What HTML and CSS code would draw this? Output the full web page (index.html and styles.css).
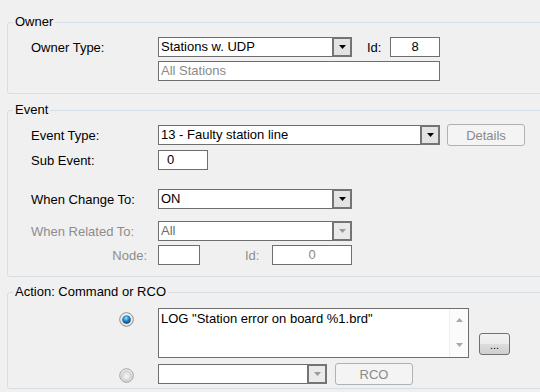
FILE: index.html
```html
<!DOCTYPE html>
<html>
<head>
<meta charset="utf-8">
<link rel="stylesheet" href="styles.css">
</head>
<body>
<fieldset class="group g-owner">
  <legend>Owner</legend>
  <div class="row r-o1">
    <span class="lbl">Owner Type:</span>
    <div class="combo w194">
      <span class="val">Stations w. UDP</span>
      <span class="drop"><svg width="7" height="4" viewBox="0 0 7 4"><polygon points="0,0 7,0 3.5,4" fill="#000"/></svg></span>
    </div>
    <span class="id-lbl">Id:</span>
    <div class="field w50 center">8</div>
  </div>
  <div class="row r-o2">
    <span class="lbl"></span>
    <div class="field w282 dis">All Stations</div>
  </div>
</fieldset>

<fieldset class="group g-event">
  <legend>Event</legend>
  <div class="row r-e1">
    <span class="lbl">Event Type:</span>
    <div class="combo w282">
      <span class="val">13 - Faulty station line</span>
      <span class="drop"><svg width="7" height="4" viewBox="0 0 7 4"><polygon points="0,0 7,0 3.5,4" fill="#000"/></svg></span>
    </div>
    <div class="btn dis-btn w78 ml7">Details</div>
  </div>
  <div class="row r-e2">
    <span class="lbl">Sub Event:</span>
    <div class="field w50 pad9">0</div>
  </div>
  <div class="row r-e3">
    <span class="lbl">When Change To:</span>
    <div class="combo w194">
      <span class="val">ON</span>
      <span class="drop"><svg width="7" height="4" viewBox="0 0 7 4"><polygon points="0,0 7,0 3.5,4" fill="#000"/></svg></span>
    </div>
  </div>
  <div class="row r-e4">
    <span class="lbl dis-txt">When Related To:</span>
    <div class="combo w194 combo-dis">
      <span class="val">All</span>
      <span class="drop"><svg width="7" height="4" viewBox="0 0 7 4"><polygon points="0,0 7,0 3.5,4" fill="#9a9a9a"/></svg></span>
    </div>
  </div>
  <div class="row r-e5">
    <span class="lbl right dis-txt">Node:</span>
    <div class="field w42"></div>
    <span class="id2 dis-txt">Id:</span>
    <div class="field w80 center dis">0</div>
  </div>
</fieldset>

<fieldset class="group g-action">
  <legend>Action: Command or RCO</legend>
  <div class="row r-a1">
    <span class="radio-cell">
      <svg class="radio" width="15" height="15" viewBox="0 0 15 15">
        <defs>
          <radialGradient id="ring1" cx="50%" cy="35%" r="65%">
            <stop offset="0" stop-color="#ffffff"/>
            <stop offset="1" stop-color="#d2d2d2"/>
          </radialGradient>
          <radialGradient id="dot" cx="45%" cy="35%" r="65%">
            <stop offset="0" stop-color="#9be4ff"/>
            <stop offset="0.45" stop-color="#2a8fd4"/>
            <stop offset="1" stop-color="#0b3a66"/>
          </radialGradient>
        </defs>
        <circle cx="7.5" cy="7.5" r="6.8" fill="url(#ring1)" stroke="#8c8e90" stroke-width="1"/>
        <circle cx="7.5" cy="7.5" r="5.4" fill="none" stroke="#f6f6f6" stroke-width="0.8"/>
        <circle cx="7.5" cy="7.5" r="4.3" fill="url(#dot)"/>
      </svg>
    </span>
    <div class="memo">
      <span class="memo-txt">LOG "Station error on board %1.brd"</span>
      <span class="sb">
        <svg width="7" height="4" viewBox="0 0 7 4"><polygon points="0,4 7,4 3.5,0" fill="#a8a8a8"/></svg>
        <svg width="7" height="4" viewBox="0 0 7 4"><polygon points="0,0 7,0 3.5,4" fill="#a8a8a8"/></svg>
      </span>
    </div>
    <div class="btn more">...</div>
  </div>
  <div class="row r-a2">
    <span class="radio-cell">
      <svg class="radio" width="15" height="15" viewBox="0 0 15 15">
        <defs>
          <radialGradient id="ring2" cx="50%" cy="35%" r="65%">
            <stop offset="0" stop-color="#ffffff"/>
            <stop offset="1" stop-color="#d6d6d6"/>
          </radialGradient>
          <radialGradient id="ring2in" cx="50%" cy="60%" r="60%">
            <stop offset="0" stop-color="#f4f4f4"/>
            <stop offset="1" stop-color="#d8d8d8"/>
          </radialGradient>
        </defs>
        <circle cx="7.5" cy="7.5" r="6.8" fill="url(#ring2)" stroke="#a3a5a7" stroke-width="1"/>
        <circle cx="7.5" cy="7.5" r="4.6" fill="url(#ring2in)" stroke="#c4c4c4" stroke-width="0.8"/>
      </svg>
    </span>
    <div class="combo w169 combo-dis">
      <span class="val"></span>
      <span class="drop"><svg width="7" height="4" viewBox="0 0 7 4"><polygon points="0,0 7,0 3.5,4" fill="#9a9a9a"/></svg></span>
    </div>
    <div class="btn dis-btn w78 ml8">RCO</div>
  </div>
</fieldset>
</body>
</html>
```

FILE: styles.css
```css
* { box-sizing: border-box; }
html, body { margin: 0; padding: 0; overflow: hidden; }
body {
  width: 540px;
  height: 392px;
  background: #f0f0f0;
  font-family: "Liberation Sans", Arial, sans-serif;
  font-size: 13px;
  line-height: 15px;
  color: #000;
}

.group {
  border: 1px solid #d5dfe5;
  border-radius: 3px;
  margin: 0 -20px 0 7px;
  padding: 0;
  min-width: 0;
}
.group legend {
  padding: 0 2px;
  margin-left: 5px;
  line-height: 14px;
}
.g-owner { margin-top: 15px; padding-bottom: 12px; }
.g-event { margin-top: 9px; padding-bottom: 11px; }
.g-action { margin-top: 8px; padding-bottom: 3px; }

.row {
  display: flex;
  align-items: center;
  padding-left: 23px;
}
.lbl { width: 127px; flex: none; white-space: nowrap; }
.lbl.right { text-align: right; padding-right: 11px; }
.dis-txt { color: #8d8d8d; }

.r-o1 { margin-top: 8px; height: 20px; }
.r-o2 { margin-top: 4px; height: 20px; }
.r-e1 { margin-top: 7px; height: 22px; }
.r-e2 { margin-top: 4px; height: 20px; }
.r-e3 { margin-top: 19px; height: 20px; }
.r-e4 { margin-top: 12px; height: 20px; }
.r-e5 { margin-top: 4px; height: 20px; }
.r-a1 { margin-top: 9px; align-items: flex-start; }
.r-a2 { margin-top: 5px; height: 22px; }

.w42 { width: 42px; }
.w50 { width: 50px; }
.w78 { width: 78px; }
.w80 { width: 80px; }
.w169 { width: 169px; }
.w194 { width: 194px; }
.w282 { width: 282px; }
.ml7 { margin-left: 7px; }
.ml8 { margin-left: 8px; }

.combo {
  display: flex;
  height: 20px;
  border: 1px solid #6e6e6e;
  background: #fff;
  flex: none;
}
.combo .val {
  flex: 1;
  padding-left: 2px;
  line-height: 18px;
  white-space: nowrap;
  overflow: hidden;
}
.combo .drop {
  width: 20px;
  margin: -1px -1px -1px 0;
  border: 2px solid #747474;
  background: #e3e3e3;
  display: flex;
  align-items: center;
  justify-content: center;
}
.combo-dis .val { color: #6d6d6d; }
.combo-dis .drop { background: #eaeaea; }

.field {
  height: 20px;
  border: 1px solid #6e6e6e;
  background: #fff;
  line-height: 18px;
  padding-left: 2px;
  flex: none;
  white-space: nowrap;
}
.field.center { text-align: center; padding-left: 0; }
.field.pad9 { padding-left: 8px; }
.field.dis { color: #8a8a8a; }

.id-lbl { margin-left: 15px; width: 23px; flex: none; }
.id2 { margin-left: 45px; width: 27px; flex: none; }

.btn {
  height: 22px;
  border-radius: 3px;
  display: flex;
  align-items: center;
  justify-content: center;
  flex: none;
}
.dis-btn {
  border: 1px solid #adb2b5;
  background: #f4f4f4;
  color: #8a8a8a;
}

.radio-cell {
  width: 127px;
  flex: none;
  display: flex;
  padding-left: 88px;
}
.r-a1 .radio-cell { padding-top: 4px; }
.r-a2 .radio-cell { padding-top: 2px; }
.radio { display: block; }

.memo {
  width: 311px;
  height: 50px;
  border: 1px solid #6e6e6e;
  background: #fff;
  display: flex;
  flex: none;
}
.memo-txt {
  flex: 1;
  padding: 2px 2px 0 2px;
  white-space: nowrap;
}
.memo .sb {
  width: 19px;
  border-left: 1px solid #efefef;
  background: #fbfbfb;
  display: flex;
  flex-direction: column;
  justify-content: space-between;
  align-items: center;
  padding: 9px 0 10px 0;
}
.memo .sb svg { display: block; }

.more {
  width: 31px;
  margin-left: 10px;
  margin-top: 25px;
  border: 1px solid #707070;
  background: linear-gradient(#f2f2f2 0%, #ebebeb 50%, #dddddd 50%, #cfcfcf 100%);
  font-size: 11px;
  line-height: 11px;
  padding-top: 2px;
}
```
